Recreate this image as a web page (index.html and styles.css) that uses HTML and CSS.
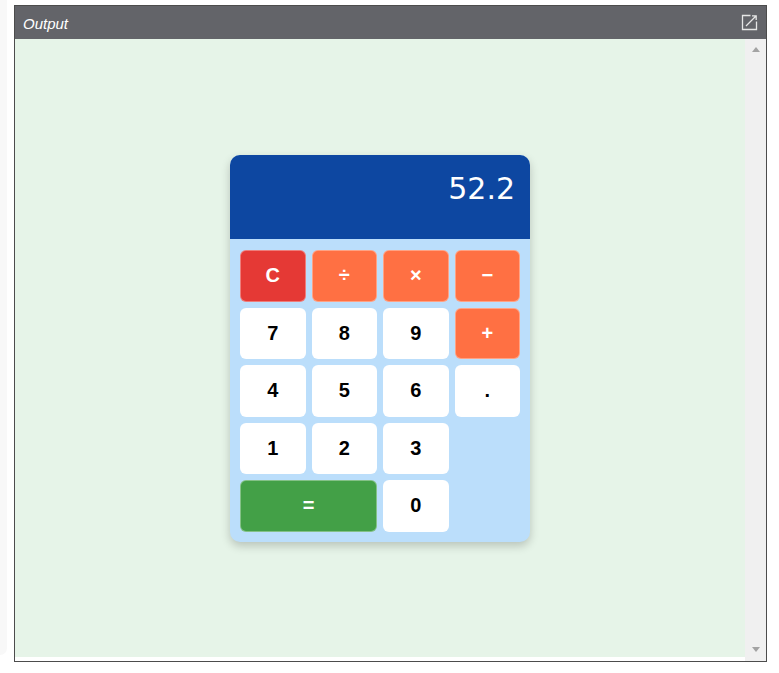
FILE: index.html
```html
<!DOCTYPE html>
<html>
<head>
<meta charset="utf-8">
<link rel="stylesheet" href="styles.css">
</head>
<body>
<div class="edge"></div>
<div class="frame">
  <div class="header">
    <span class="title">Output</span>
    <svg class="pop" width="17" height="17" viewBox="0 0 17 17">
      <path d="M9.5 1.5H1.5V15.5H15.5V7.5" fill="none" stroke="#e6e6e6" stroke-width="1.3"/>
      <path d="M5 12L15 2M11 1.8H15.2V6" fill="none" stroke="#e6e6e6" stroke-width="1.3"/>
    </svg>
  </div>
  <div class="body">
    <div class="main">
      <div class="stage">
        <div class="calc">
          <div class="display">52.2</div>
          <div class="keys">
            <button class="key clear">C</button>
            <button class="key op">÷</button>
            <button class="key op">×</button>
            <button class="key op">−</button>
            <button class="key">7</button>
            <button class="key">8</button>
            <button class="key">9</button>
            <button class="key op">+</button>
            <button class="key">4</button>
            <button class="key">5</button>
            <button class="key">6</button>
            <button class="key">.</button>
            <button class="key">1</button>
            <button class="key">2</button>
            <button class="key">3</button>
            <span></span>
            <button class="key eq">=</button>
            <button class="key">0</button>
          </div>
        </div>
      </div>
      <div class="strip"></div>
    </div>
    <div class="scroll">
      <span class="arrow up"></span>
      <span class="arrow down"></span>
    </div>
  </div>
</div>
</body>
</html>
```

FILE: styles.css
```css
html, body {
  margin: 0;
  padding: 0;
  background: #ffffff;
}
body {
  position: relative;
  padding: 5px 0 0 14px;
  height: 673px;
  box-sizing: border-box;
  overflow: hidden;
  font-family: "Liberation Sans", Arial, sans-serif;
}
.edge {
  position: absolute;
  left: 0;
  top: 0;
  width: 7px;
  height: 655px;
  background: #f8f8f8;
  border-bottom-right-radius: 8px;
}
.frame {
  position: relative;
  width: 753px;
  height: 657px;
  box-sizing: border-box;
  border: 1px solid #4c4c4c;
  display: flex;
  flex-direction: column;
}
.header {
  height: 33px;
  background: #636469;
  display: flex;
  align-items: center;
  justify-content: space-between;
  padding: 0 8px 0 8px;
}
.title {
  color: #ffffff;
  font-style: italic;
  font-size: 15px;
  padding-top: 1px;
}
.pop {
  display: block;
  margin-top: -1px;
}
.body {
  flex: 1;
  display: flex;
}
.main {
  width: 730px;
  display: flex;
  flex-direction: column;
}
.stage {
  height: 618px;
  background: #e6f4e8;
  display: flex;
  align-items: center;
  justify-content: center;
}
.strip {
  flex: 1;
  background: #ffffff;
}
.scroll {
  width: 21px;
  background: #f0f0f0;
  display: flex;
  flex-direction: column;
  justify-content: space-between;
  align-items: center;
  padding: 8px 0 9px;
  box-sizing: border-box;
}
.arrow {
  width: 0;
  height: 0;
  border-left: 4.5px solid transparent;
  border-right: 4.5px solid transparent;
}
.arrow.up {
  border-bottom: 5px solid #a3a3a3;
}
.arrow.down {
  border-top: 5px solid #a3a3a3;
}
.calc {
  width: 300px;
  border-radius: 10px;
  overflow: hidden;
  background: #bbdefb;
  box-shadow: 0 4px 10px rgba(0, 0, 0, 0.2);
}
.display {
  height: 84.5px;
  box-sizing: border-box;
  background: #0d47a1;
  color: #ffffff;
  font-family: "DejaVu Sans", Verdana, sans-serif;
  font-size: 30px;
  text-align: right;
  padding: 16px 15px 0 0;
}
.keys {
  display: grid;
  grid-template-columns: repeat(4, 1fr);
  grid-auto-rows: 51.5px;
  gap: 6px;
  padding: 11px 10px 10px;
}
.key {
  border: 1px solid rgba(255, 255, 255, 0.35);
  border-radius: 6px;
  background: #ffffff;
  color: #000000;
  font-family: "Liberation Sans", Arial, sans-serif;
  font-weight: bold;
  font-size: 20px;
  padding: 0;
  margin: 0;
}
.key.op {
  background: #ff7043;
  color: #ffffff;
}
.key.clear {
  background: #e53935;
  color: #ffffff;
}
.key.eq {
  background: #43a047;
  color: #ffffff;
  grid-column: span 2;
}
```
